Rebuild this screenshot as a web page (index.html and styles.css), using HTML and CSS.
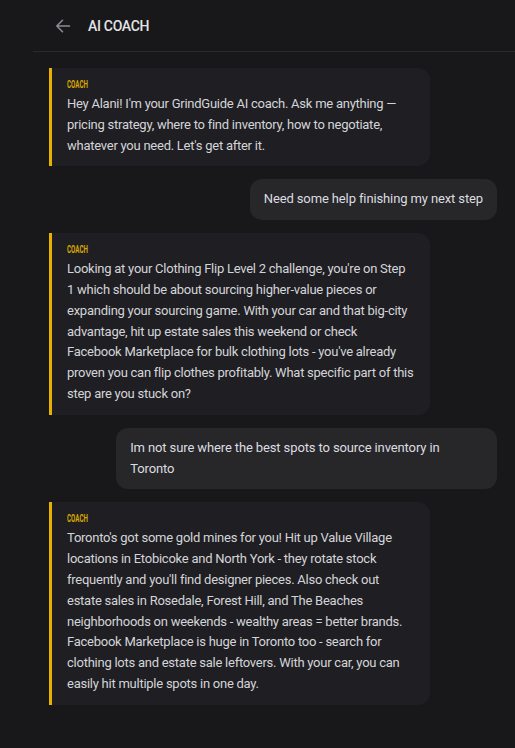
FILE: index.html
```html
<!DOCTYPE html>
<html lang="en">
<head>
<meta charset="utf-8">
<title>AI Coach</title>
<link rel="stylesheet" href="styles.css">
</head>
<body>
<div class="chat">
  <header class="header">
    <button class="back" aria-label="Back">
      <svg width="16" height="14" viewBox="0 0 16 14" fill="none" stroke="currentColor" stroke-width="1.6" stroke-linecap="round" stroke-linejoin="round"><path d="M14.5 7H1.8M7.5 1.3 1.8 7l5.7 5.7"/></svg>
    </button>
    <h1 class="title">AI COACH</h1>
  </header>
  <main class="messages">
    <div class="bubble coach">
      <div class="label">COACH</div>
      <p class="text">Hey Alani! I'm your GrindGuide AI coach. Ask me anything — pricing strategy, where to find inventory, how to negotiate, whatever you need. Let's get after it.</p>
    </div>
    <div class="bubble user">
      <p class="text">Need some help finishing my next step</p>
    </div>
    <div class="bubble coach">
      <div class="label">COACH</div>
      <p class="text">Looking at your Clothing Flip Level 2 challenge, you're on Step 1 which should be about sourcing higher-value pieces or expanding your sourcing game. With your car and that big-city advantage, hit up estate sales this weekend or check Facebook Marketplace for bulk clothing lots - you've already proven you can flip clothes profitably. What specific part of this step are you stuck on?</p>
    </div>
    <div class="bubble user">
      <p class="text">Im not sure where the best spots to source inventory in Toronto</p>
    </div>
    <div class="bubble coach">
      <div class="label">COACH</div>
      <p class="text">Toronto's got some gold mines for you! Hit up Value Village locations in Etobicoke and North York - they rotate stock frequently and you'll find designer pieces. Also check out estate sales in Rosedale, Forest Hill, and The Beaches neighborhoods on weekends - wealthy areas = better brands. Facebook Marketplace is huge in Toronto too - search for clothing lots and estate sale leftovers. With your car, you can easily hit multiple spots in one day.</p>
    </div>
  </main>
</div>
</body>
</html>
```
FILE: styles.css
```css
* { box-sizing: border-box; }
html, body {
  margin: 0;
  background: #18181b;
  height: 100%;
}
body {
  font-family: Roboto, "Liberation Sans", sans-serif;
  color: #d4d4d8;
}
.chat {
  margin-left: 33px;
}
.header {
  height: 52px;
  border-bottom: 1px solid #2a2a2e;
  display: flex;
  align-items: center;
  padding-left: 22px;
  gap: 17px;
}
.back {
  background: none;
  border: 0;
  padding: 0;
  color: #8b8b92;
  display: flex;
  align-items: center;
  width: 16px;
  height: 16px;
}
.title {
  margin: 0;
  font-size: 14px;
  font-weight: 500;
  color: #e4e4e7;
  letter-spacing: -0.3px;
}
.messages {
  display: flex;
  flex-direction: column;
  gap: 13px;
  padding: 16px 18px 16px 16px;
}
.bubble {
  max-width: 85%;
}
.text {
  margin: 0;
  font-size: 13px;
  line-height: 20.8px;
  letter-spacing: -0.25px;
}
.coach {
  align-self: flex-start;
  background: #1f1f23;
  border-left: 3px solid #e8b100;
  border-radius: 0 12px 12px 0;
  padding: 11px 16px 10px 15px;
}
.label {
  display: block;
  width: max-content;
  font-size: 10px;
  line-height: 12px;
  font-weight: 700;
  color: #d9a800;
  transform: scaleX(0.62);
  transform-origin: left center;
  margin-bottom: 3px;
}
.user {
  align-self: flex-end;
  background: #27272a;
  border-radius: 12px;
  padding: 10px 14px;
}
.user .text {
  color: #dcdce0;
  letter-spacing: -0.12px;
}
```
